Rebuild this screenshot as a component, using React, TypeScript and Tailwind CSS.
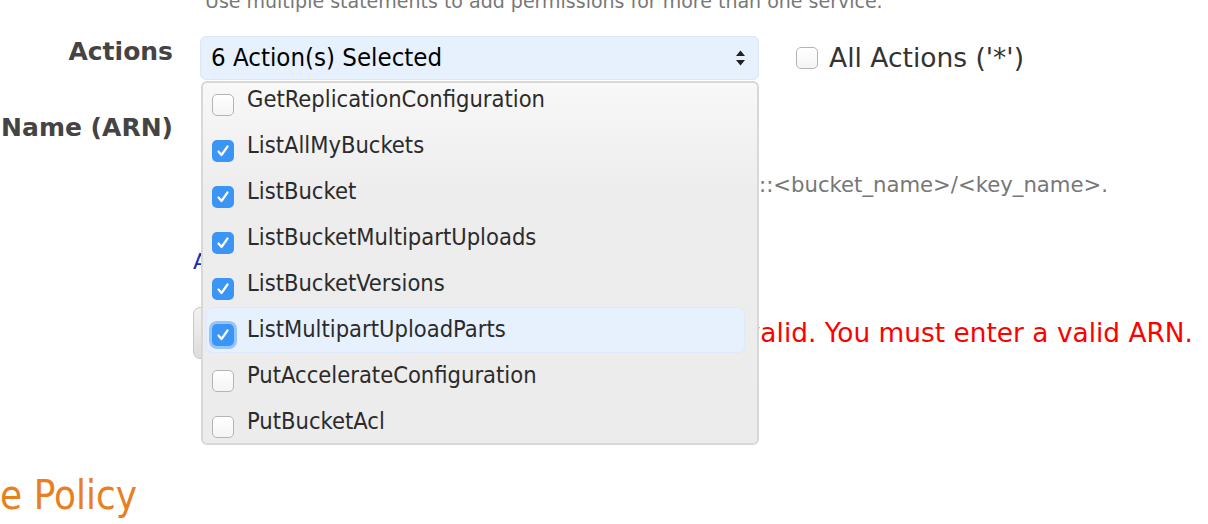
import React from "react";

const actions = [
  { name: "GetReplicationConfiguration", checked: false },
  { name: "ListAllMyBuckets", checked: true },
  { name: "ListBucket", checked: true },
  { name: "ListBucketMultipartUploads", checked: true },
  { name: "ListBucketVersions", checked: true },
  { name: "ListMultipartUploadParts", checked: true, active: true },
  { name: "PutAccelerateConfiguration", checked: false },
  { name: "PutBucketAcl", checked: false },
];

const Box = ({ checked, focus }: { checked: boolean; focus?: boolean }) => {
  if (checked) {
    return (
      <span
        className={
          "flex h-[22px] w-[22px] shrink-0 items-center justify-center rounded-[5px] bg-[#3b95f7] " +
          (focus ? "ring-[3px] ring-[#94c4fa]" : "")
        }
      >
        <svg width="22" height="22" viewBox="0 0 22 22">
          <path d="M6.5 11.5 L9.5 15 L15.5 6.5" fill="none" stroke="#fff" strokeWidth="2.2" strokeLinecap="round" strokeLinejoin="round" />
        </svg>
      </span>
    );
  }
  return (
    <span className="block h-[22px] w-[22px] shrink-0 rounded-[5px] border border-[#b4b4b4] bg-gradient-to-b from-white to-[#f4f4f4]" />
  );
};

const App = () => {
  return (
    <div className="relative h-[524px] w-[1208px] overflow-hidden bg-white font-['DejaVu_Sans',sans-serif]">
      {/* help text, cut by the top edge */}
      <div className="-mt-[11px] whitespace-nowrap pl-[205px] text-[19px] leading-[24px] text-[#777]">
        Use multiple statements to add permissions for more than one service.
      </div>

      {/* Actions row */}
      <div className="mt-[23px] flex items-start">
        <div className="flex w-[173px] justify-end whitespace-nowrap pt-[1px] text-[25px] font-bold leading-[30px] text-[#444]">
          Actions
        </div>
        <div className="relative ml-[27px] w-[559px]">
          <div className="flex h-[44px] items-center justify-between rounded-[6px] border border-[#d9e7f7] bg-[#e7f1fd] pl-[10px] pr-[12px]">
            <span className="font-['DejaVu_Sans_Condensed',sans-serif] text-[25.6px] leading-none text-black">
              6 Action(s) Selected
            </span>
            <svg width="11" height="16" viewBox="0 0 11 16">
              <path d="M5.5 0.5 L10 6 H1 Z" fill="#222" />
              <path d="M5.5 15.5 L10 10 H1 Z" fill="#222" />
            </svg>
          </div>

          {/* open dropdown menu */}
          <div className="absolute left-[1px] top-[45px] z-10 h-[364px] w-[558px] overflow-hidden rounded-[6px] border-2 border-[#d8d8d8] bg-gradient-to-b from-[#f8f8f8] via-[#ededed] via-30% to-[#ececec]">
            <div className="-mt-[6px] flex flex-col font-['DejaVu_Sans_Condensed',sans-serif] text-[23.5px] text-[#2b2b2b]">
              {actions.map((a) => (
                <div
                  key={a.name}
                  className={
                    "relative ml-[3px] mr-[12px] flex h-[46px] items-center rounded-[7px] border pl-[5px] " +
                    (a.active ? "border-[#dce9f8] bg-[#e7f1fd]" : "border-transparent")
                  }
                >
                  <span className="mt-[10px]">
                    <Box checked={a.checked} focus={a.active} />
                  </span>
                  <span className="ml-[13px] leading-none">{a.name}</span>
                </div>
              ))}
            </div>
          </div>
        </div>
        <label className="ml-[37px] mt-[9px] flex items-center gap-[11px] text-[26.5px] leading-none text-[#333]">
          <Box checked={false} />
          All Actions ('*')
        </label>
      </div>

      {/* ARN row */}
      <div className="mt-[33px] flex items-start">
        <div className="flex w-[173px] justify-end whitespace-nowrap text-[25px] font-bold leading-[30px] text-[#444]">
          Amazon Resource Name (ARN)
        </div>
        <div className="ml-[27px] h-[44px] w-[559px] rounded-[6px] bg-white" />
      </div>
      <div className="mt-[15px] flex w-[1108px] justify-end whitespace-nowrap text-[21.2px] leading-[26px] text-[#777]">
        ARN should follow the format arn:aws:s3:::&lt;bucket_name&gt;/&lt;key_name&gt;.
      </div>

      {/* link */}
      <div className="mt-[51px] pl-[193px] text-[22px] leading-[26px] text-[#1a2bb0]">Add Conditions (optional)</div>

      {/* button + error */}
      <div className="mt-[32px] flex items-center">
        <div className="ml-[193px] flex h-[52px] w-[240px] items-center justify-center rounded-[7px] border border-[#c8c8c8] bg-gradient-to-b from-[#f2f2f2] to-[#dcdcdc] text-[22px] text-[#333]">
          Add Statement
        </div>
        <div className="ml-auto mr-[15px] whitespace-nowrap text-[26.4px] leading-none text-[#ff0000]">
          The ARN is invalid. You must enter a valid ARN.
        </div>
      </div>

      {/* next step heading */}
      <div className="mt-[112px] flex w-[137px] justify-end whitespace-nowrap font-['DejaVu_Sans_Condensed',sans-serif] text-[40px] leading-[48px] text-[#e8801f]">
        Step 3: Generate Policy
      </div>
    </div>
  );
};

export default App;
